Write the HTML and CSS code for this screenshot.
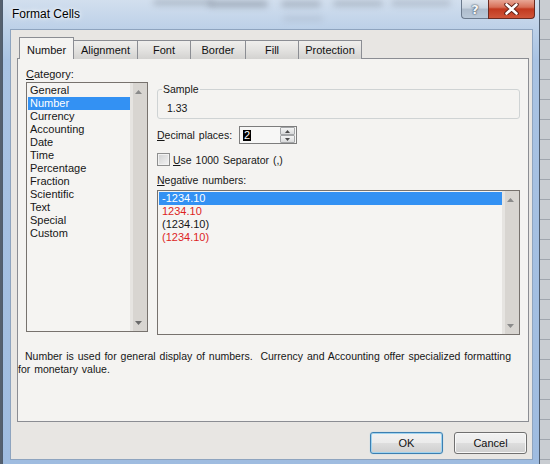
FILE: index.html
```html
<!DOCTYPE html>
<html>
<head>
<meta charset="utf-8">
<link rel="stylesheet" href="styles.css">
</head>
<body>
<div class="desktop">
  <div class="window">
    <div class="glass">
      <span class="blob b1"></span><span class="blob b2"></span><span class="blob b3"></span>
      <span class="blob b4"></span><span class="blob b5"></span><span class="blob b6"></span>
    </div>
    <div class="titlebar">
      <span class="title">Format Cells</span>
      <div class="caption-btns">
        <div class="cb help">?</div>
        <div class="cb close">
          <svg width="15" height="12" viewBox="0 0 15 12"><path d="M2.5 1.5 L12.5 10.5 M12.5 1.5 L2.5 10.5" stroke="#5a1d14" stroke-width="4.4" stroke-linecap="round"/><path d="M2.5 1.5 L12.5 10.5 M12.5 1.5 L2.5 10.5" stroke="#ffffff" stroke-width="2.6" stroke-linecap="round"/></svg>
        </div>
      </div>
    </div>
    <div class="client">
      <div class="tabs">
        <div class="tab active t-number">Number</div>
        <div class="tab t-align">Alignment</div>
        <div class="tab t-font">Font</div>
        <div class="tab t-border">Border</div>
        <div class="tab t-fill">Fill</div>
        <div class="tab t-prot">Protection</div>
      </div>
      <div class="panel">
        <div class="cols">
          <div class="left">
            <div class="lbl"><u>C</u>ategory:</div>
            <div class="listbox cat">
              <div class="items">
                <div class="row">General</div>
                <div class="row sel">Number</div>
                <div class="row">Currency</div>
                <div class="row">Accounting</div>
                <div class="row">Date</div>
                <div class="row">Time</div>
                <div class="row">Percentage</div>
                <div class="row">Fraction</div>
                <div class="row">Scientific</div>
                <div class="row">Text</div>
                <div class="row">Special</div>
                <div class="row">Custom</div>
              </div>
              <div class="vscroll">
                <span class="arrow-btn"><svg width="7" height="4" viewBox="0 0 7 4"><path d="M0 4 L3.5 0 L7 4 Z" fill="#8a8a8a"/></svg></span>
                <span class="arrow-btn"><svg width="7" height="4" viewBox="0 0 7 4"><path d="M0 0 L7 0 L3.5 4 Z" fill="#6a6a6a"/></svg></span>
              </div>
            </div>
          </div>
          <div class="right">
            <fieldset class="sample">
              <legend>Sample</legend>
              <div class="sample-val">1.33</div>
            </fieldset>
            <div class="decimal-row">
              <span class="dec-lbl"><u>D</u>ecimal places:</span>
              <div class="spin">
                <span class="spin-val"><span class="hl">2</span></span>
                <div class="spin-btns">
                  <span class="sb"><svg width="5" height="3" viewBox="0 0 5 3"><path d="M0 3 L2.5 0 L5 3 Z" fill="#4a4a4a"/></svg></span>
                  <span class="sb"><svg width="5" height="3" viewBox="0 0 5 3"><path d="M0 0 L5 0 L2.5 3 Z" fill="#4a4a4a"/></svg></span>
                </div>
              </div>
            </div>
            <div class="check-row">
              <span class="checkbox"></span>
              <span><u>U</u>se 1000 Separator (,)</span>
            </div>
            <div class="lbl neg-lbl"><u>N</u>egative numbers:</div>
            <div class="listbox neg">
              <div class="items">
                <div class="row sel">-1234.10</div>
                <div class="row red">1234.10</div>
                <div class="row">(1234.10)</div>
                <div class="row red">(1234.10)</div>
              </div>
              <div class="vscroll">
                <span class="arrow-btn"><svg width="7" height="4" viewBox="0 0 7 4"><path d="M0 4 L3.5 0 L7 4 Z" fill="#8a8a8a"/></svg></span>
                <span class="arrow-btn"><svg width="7" height="4" viewBox="0 0 7 4"><path d="M0 0 L7 0 L3.5 4 Z" fill="#8a8a8a"/></svg></span>
              </div>
            </div>
          </div>
        </div>
        <p class="desc">Number is used for general display of numbers.&nbsp; Currency and Accounting offer specialized formatting<br>for monetary value.</p>
      </div>
      <div class="buttons">
        <div class="btn default">OK</div>
        <div class="btn">Cancel</div>
      </div>
    </div>
  </div>
</div>
</body>
</html>
```

FILE: styles.css
```css
* { box-sizing: border-box; }

html, body {
  margin: 0;
  padding: 0;
}

body {
  width: 550px;
  height: 464px;
  overflow: hidden;
  font-family: "Liberation Sans", Arial, sans-serif;
  font-size: 10.5px;
  word-spacing: 1px;
  color: #161616;
}

.desktop {
  width: 550px;
  height: 464px;
  display: flex;
  background:
    linear-gradient(90deg, #55606e 0 2px, transparent 2px),
    repeating-linear-gradient(180deg, #c9cdd2 0 19px, #a0a6ae 19px 20px);
}

.window {
  position: relative;
  margin-left: 2px;
  width: 538px;
  height: 464px;
  display: flex;
  flex-direction: column;
  border-left: 1px solid #4e5c6e;
  border-right: 1px solid #4e5c6e;
  background: linear-gradient(180deg, #d2dfee 0px, #bdd1e8 28px, #a9c3e3 60px, #9fbce0 100%);
}

.glass {
  position: absolute;
  left: 0;
  top: 0;
  right: 0;
  height: 28px;
  overflow: hidden;
  pointer-events: none;
}

.blob {
  position: absolute;
  background: #6e7784;
  filter: blur(3px);
  opacity: 0.4;
  border-radius: 4px;
}
.b1 { left: 150px; top: 0; width: 60px; height: 5px; }
.b2 { left: 205px; top: 1px; width: 60px; height: 6px; opacity: 0.5; }
.b3 { left: 278px; top: 1px; width: 40px; height: 6px; }
.b4 { left: 330px; top: 1px; width: 50px; height: 5px; }
.b5 { left: 388px; top: 0; width: 60px; height: 6px; opacity: 0.3; }
.b6 { left: 280px; top: 16px; width: 40px; height: 5px; opacity: 0.18; }

.titlebar {
  position: relative;
  height: 29px;
  display: flex;
  align-items: flex-start;
  padding-left: 9px;
  padding-right: 4px;
}

.title {
  padding-top: 7px;
  font-size: 12px;
  word-spacing: 0;
  line-height: 14px;
  color: #000;
  text-shadow: 0 0 6px #fff, 0 0 3px #fff;
}

.caption-btns {
  margin-left: auto;
  display: flex;
}

.cb {
  height: 19px;
  display: flex;
  align-items: center;
  justify-content: center;
}

.help {
  width: 27px;
  border: 1px solid #6b7a8d;
  border-top: none;
  border-right: none;
  border-bottom-left-radius: 4px;
  background: linear-gradient(180deg, #dfe6ee 0%, #c9d4e0 45%, #aebccc 50%, #b9c8d8 100%);
  color: #f4f7fa;
  font-family: "DejaVu Sans", sans-serif;
  font-weight: bold;
  font-size: 13px;
  text-shadow: 0 0 2px #3b4756, 0 0 1px #3b4756;
}

.close {
  width: 47px;
  border: 1px solid #6a2a20;
  border-top: none;
  border-bottom-right-radius: 4px;
  background: linear-gradient(180deg, #e8a796 0%, #d76f57 40%, #c2391f 50%, #d0563a 100%);
}

.client {
  margin-left: 7px;
  margin-right: 6px;
  height: 431px;
  border: 1px solid #8ea4bf;
  background: #e8e6e3;
  padding: 8px 3px 0 6px;
  display: flex;
  flex-direction: column;
}

.tabs {
  display: flex;
  align-items: flex-end;
  padding-left: 2px;
  height: 21px;
  margin-bottom: -1px;
  position: relative;
  z-index: 1;
}

.tab {
  height: 19px;
  border: 1px solid #8b8d93;
  border-bottom: none;
  border-right: none;
  background: linear-gradient(180deg, #efeeec 0%, #e3e2e0 50%, #d3d2d0 100%);
  text-align: center;
  font-size: 11px;
  word-spacing: 0;
  line-height: 15px;
  padding-top: 2px;
  color: #111;
}
.tab:last-child { border-right: 1px solid #8b8d93; }

.tab.active {
  height: 22px;
  border-right: 1px solid #8b8d93;
  background: #f4f3f1;
  line-height: 16px;
  padding-top: 4px;
}

.t-number { width: 55px; }
.t-align { width: 64px; margin-left: -1px; }
.t-font { width: 53px; }
.t-border { width: 55px; }
.t-fill { width: 53px; }
.t-prot { width: 64px; }

.panel {
  height: 364px;
  border: 1px solid #8b8d93;
  background: #f4f3f1;
  padding: 9px 8px 0 8px;
}

.cols {
  display: flex;
  gap: 9px;
}

.left { width: 122px; font-size: 11px; word-spacing: 0; }
.right { width: 363px; display: flex; flex-direction: column; }

.lbl {
  height: 13px;
  line-height: 13px;
}

.listbox {
  display: flex;
  border: 1px solid #77726e;
  background: #f5f4f2;
}

.cat {
  margin-top: 1px;
  height: 250px;
}

.items {
  flex: 1;
  padding: 1px 0 0 1px;
}

.row {
  height: 13px;
  line-height: 13px;
  padding-left: 2px;
  white-space: nowrap;
}

.row.sel {
  background: #3391f3;
  color: #fff;
}

.row.red { color: #dd1f1f; }

.neg .row { padding-left: 3px; font-size: 11px; }

.vscroll {
  width: 17px;
  display: flex;
  flex-direction: column;
  justify-content: space-between;
  background: linear-gradient(90deg, #e6e4e1 0 3px, #d8d5d1 3px);
}

.arrow-btn {
  height: 17px;
  display: flex;
  align-items: center;
  justify-content: center;
}

.sample {
  margin: 15px 0 0 0;
  padding: 6px 0 3px 4px;
  border: 1px solid #cfd3d4;
  border-radius: 3px;
  min-width: 0;
}

.sample legend {
  padding: 0 1px;
  line-height: 13px;
  height: 13px;
}

.sample-val {
  height: 13px;
  line-height: 13px;
  padding-left: 5px;
}

.decimal-row {
  margin-top: 7px;
  display: flex;
  align-items: center;
  height: 18px;
}

.dec-lbl { width: 82px; }

.spin {
  width: 58px;
  height: 18px;
  border: 1px solid #7d7d7d;
  background: #f7f7f6;
  display: flex;
  align-items: center;
  justify-content: space-between;
}

.spin-val {
  padding-left: 3px;
}

.hl {
  display: inline-block;
  background: #000;
  color: #fff;
  line-height: 11px;
  height: 11px;
  padding: 0 1px;
  font-size: 11px;
}

.spin-btns {
  width: 15px;
  height: 16px;
  display: flex;
  flex-direction: column;
  margin-right: 1px;
}

.sb {
  height: 8px;
  border: 1px solid #a4a6a8;
  border-radius: 1px;
  background: linear-gradient(180deg, #f4f4f4, #d9dadb);
  display: flex;
  align-items: center;
  justify-content: center;
}

.check-row {
  margin-top: 9px;
  display: flex;
  align-items: center;
  height: 13px;
  gap: 3px;
}

.checkbox {
  width: 13px;
  height: 13px;
  border: 1px solid #8e8f8f;
  background: linear-gradient(135deg, #cfd0d1, #f4f4f4);
  box-shadow: inset 0 0 0 1px #f2f2f2;
}

.neg-lbl { margin-top: 8px; }

.neg {
  margin-top: 3px;
  height: 145px;
}

.desc {
  margin: 15px 0 0 -8px;
  padding-left: 0;
  text-indent: 7px;
  line-height: 13px;
  white-space: nowrap;
}

.buttons {
  margin-top: 10px;
  margin-right: 2px;
  display: flex;
  justify-content: flex-end;
  gap: 11px;
}

.btn {
  width: 73px;
  height: 22px;
  border: 1px solid #707070;
  border-radius: 3px;
  background: linear-gradient(180deg, #f2f2f2 0%, #ebebeb 48%, #dddddd 52%, #cfcfcf 100%);
  box-shadow: inset 0 0 0 1px #f8f8f8;
  text-align: center;
  font-size: 11px;
  line-height: 20px;
  color: #111;
}

.btn.default {
  border-color: #3c7fb1;
  box-shadow: inset 0 0 0 1px #9fd3ef, 0 0 1px #7fc4ea;
}
```
